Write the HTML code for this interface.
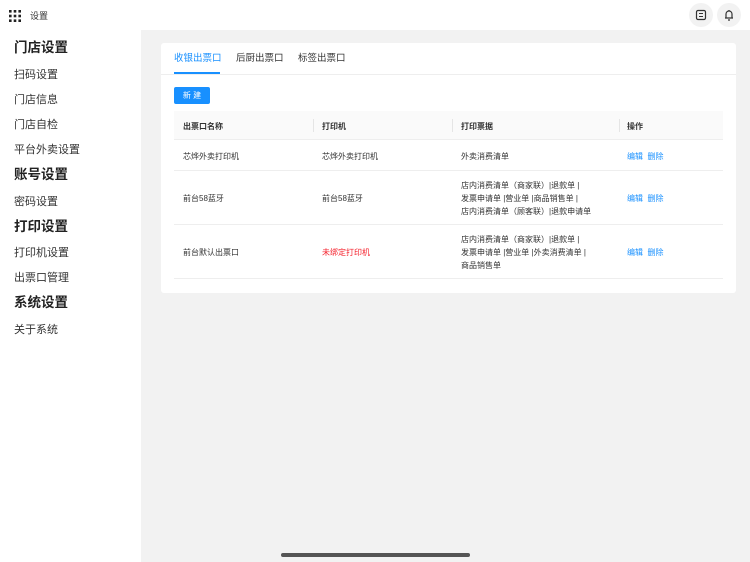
<!DOCTYPE html>
<html><head><meta charset="utf-8"><style>
*{margin:0;padding:0;box-sizing:border-box}
body{width:750px;height:562px;overflow:hidden;background:#fff;font-family:"Liberation Sans","Noto Sans CJK SC",sans-serif;color:#333;position:relative}
.abs{position:absolute}
.main{position:absolute;left:141px;top:30px;width:609px;height:532px;background:#f2f2f2}
.card{position:absolute;left:161px;top:43px;width:575px;height:250px;background:#fff;border-radius:3px}
.side{font-size:11px;color:#333;position:absolute;left:0;top:2px}
.side div{position:absolute;left:14px;white-space:nowrap;line-height:14px}
.side .h{font-size:13.5px;font-weight:bold;color:#222;line-height:16px}
.t{position:absolute;font-size:8px;color:#333;white-space:nowrap;line-height:13px}
.link{color:#1890ff}
</style></head><body>
<div class="abs" style="left:9px;top:9px;width:12px;height:12px">
<svg width="12" height="12"><g fill="#222"><rect x="0" y="0" width="2.6" height="2.6"/><rect x="4.7" y="0" width="2.6" height="2.6"/><rect x="9.4" y="0" width="2.6" height="2.6"/><rect x="0" y="4.7" width="2.6" height="2.6"/><rect x="4.7" y="4.7" width="2.6" height="2.6"/><rect x="9.4" y="4.7" width="2.6" height="2.6"/><rect x="0" y="9.4" width="2.6" height="2.6"/><rect x="4.7" y="9.4" width="2.6" height="2.6"/><rect x="9.4" y="9.4" width="2.6" height="2.6"/></g></svg></div>
<div class="abs" style="left:30px;top:9px;font-size:9px;color:#333">设置</div>
<div class="abs" style="left:689px;top:3px;width:24px;height:24px;border-radius:12px;background:#f2f2f2"><svg width="24" height="24"><rect x="7.5" y="7.5" width="9" height="9" rx="1.5" fill="none" stroke="#333" stroke-width="1.2"/><path d="M10 10.5h4M10 13.5h4" stroke="#333" stroke-width="1"/></svg></div>
<div class="abs" style="left:717px;top:3px;width:24px;height:24px;border-radius:12px;background:#f2f2f2"><svg width="24" height="24"><path d="M9 15V11a3 3 0 0 1 6 0v4zM8 15h8M11 17h2M12 7v1" fill="none" stroke="#333" stroke-width="1.2"/></svg></div>
<div class="side">
<div class="h" style="top:38px">门店设置</div>
<div style="top:66px">扫码设置</div>
<div style="top:91px">门店信息</div>
<div style="top:116px">门店自检</div>
<div style="top:141px">平台外卖设置</div>
<div class="h" style="top:165px">账号设置</div>
<div style="top:193px">密码设置</div>
<div class="h" style="top:217px">打印设置</div>
<div style="top:244px">打印机设置</div>
<div style="top:269px">出票口管理</div>
<div class="h" style="top:293px">系统设置</div>
<div style="top:321px">关于系统</div>
</div>
<div class="main"></div>
<div class="card">
<div class="abs" style="left:0;top:31px;width:575px;height:1px;background:#eee"></div>
<div class="t link" style="left:13px;top:9px;font-size:9.5px">收银出票口</div>
<div class="abs" style="left:13px;top:29px;width:46px;height:2px;background:#1890ff"></div>
<div class="t" style="left:75px;top:9px;font-size:9.5px">后厨出票口</div>
<div class="t" style="left:137px;top:9px;font-size:9.5px">标签出票口</div>
<div class="abs" style="left:13px;top:44px;width:36px;height:17px;background:#1890ff;border-radius:2px;color:#fff;font-size:8px;text-align:center;line-height:17px">新 建</div>
<div class="abs" style="left:13px;top:68px;width:549px;height:29px;background:#fafafa;border-bottom:1px solid #eee"></div>
<div class="abs" style="left:13px;top:127px;width:549px;height:1px;background:#eee"></div>
<div class="abs" style="left:13px;top:181px;width:549px;height:1px;background:#eee"></div>
<div class="abs" style="left:13px;top:235px;width:549px;height:1px;background:#eee"></div>
<div class="abs" style="left:152px;top:76px;width:1px;height:13px;background:#e5e5e5"></div>
<div class="abs" style="left:291px;top:76px;width:1px;height:13px;background:#e5e5e5"></div>
<div class="abs" style="left:458px;top:76px;width:1px;height:13px;background:#e5e5e5"></div>
<div class="t" style="left:22px;top:77px;font-weight:bold">出票口名称</div>
<div class="t" style="left:161px;top:77px;font-weight:bold">打印机</div>
<div class="t" style="left:300px;top:77px;font-weight:bold">打印票据</div>
<div class="t" style="left:466px;top:77px;font-weight:bold">操作</div>
<div class="t" style="left:22px;top:107px">芯烨外卖打印机</div>
<div class="t" style="left:161px;top:107px">芯烨外卖打印机</div>
<div class="t" style="left:300px;top:107px">外卖消费清单</div>
<div class="t link" style="left:466px;top:107px">编辑&nbsp;&nbsp;删除</div>
<div class="t" style="left:22px;top:149px">前台58蓝牙</div>
<div class="t" style="left:161px;top:149px">前台58蓝牙</div>
<div class="t" style="left:300px;top:136px">店内消费清单（商家联）|退款单 |<br>发票申请单 |营业单 |商品销售单 |<br>店内消费清单（顾客联）|退款申请单</div>
<div class="t link" style="left:466px;top:149px">编辑&nbsp;&nbsp;删除</div>
<div class="t" style="left:22px;top:203px">前台默认出票口</div>
<div class="t" style="left:161px;top:203px;color:#f5222d">未绑定打印机</div>
<div class="t" style="left:300px;top:190px">店内消费清单（商家联）|退款单 |<br>发票申请单 |营业单 |外卖消费清单 |<br>商品销售单</div>
<div class="t link" style="left:466px;top:203px">编辑&nbsp;&nbsp;删除</div>
</div>
<div class="abs" style="left:281px;top:553px;width:189px;height:4px;border-radius:2px;background:#555"></div>
</body></html>
